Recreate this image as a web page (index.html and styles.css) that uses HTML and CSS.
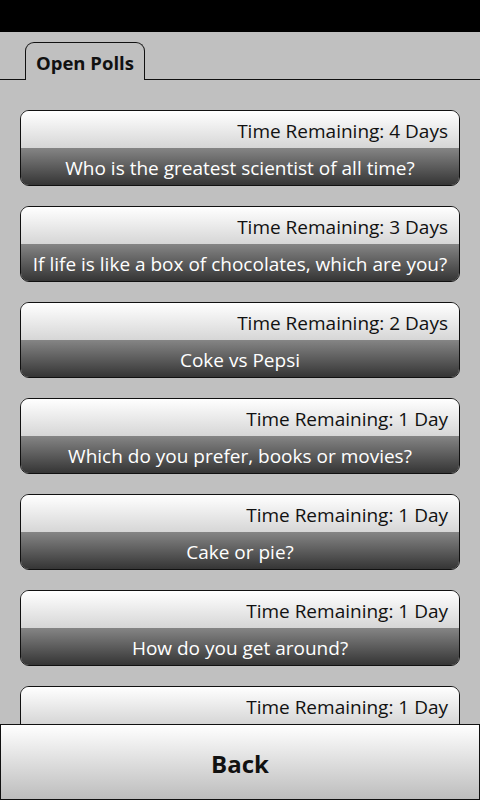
FILE: index.html
```html
<!DOCTYPE html>
<html lang="en">
<head>
    <meta charset="UTF-8">
    <meta name="viewport" content="width=device-width, initial-scale=1.0">
    <title>Open Polls</title>
    <link rel="stylesheet" href="styles.css">
</head>
<body>
    <div class="status-bar"></div>

    <div class="tabs">
        <div class="tab-line tab-line-left"></div>
        <div class="tab">Open Polls</div>
        <div class="tab-line"></div>
    </div>

    <div class="poll-list">
        <div class="poll">
            <div class="poll-time">Time Remaining: 4 Days</div>
            <div class="poll-question">Who is the greatest scientist of all time?</div>
        </div>
        <div class="poll">
            <div class="poll-time">Time Remaining: 3 Days</div>
            <div class="poll-question">If life is like a box of chocolates, which are you?</div>
        </div>
        <div class="poll">
            <div class="poll-time">Time Remaining: 2 Days</div>
            <div class="poll-question">Coke vs Pepsi</div>
        </div>
        <div class="poll">
            <div class="poll-time">Time Remaining: 1 Day</div>
            <div class="poll-question">Which do you prefer, books or movies?</div>
        </div>
        <div class="poll">
            <div class="poll-time">Time Remaining: 1 Day</div>
            <div class="poll-question">Cake or pie?</div>
        </div>
        <div class="poll">
            <div class="poll-time">Time Remaining: 1 Day</div>
            <div class="poll-question">How do you get around?</div>
        </div>
        <div class="poll">
            <div class="poll-time">Time Remaining: 1 Day</div>
            <div class="poll-question"></div>
        </div>
    </div>

    <button class="back-btn">Back</button>
</body>
</html>
```

FILE: styles.css
```css
body {
    margin: 0;
    height: 800px;
    display: flex;
    flex-direction: column;
    overflow: hidden;
    background-color: #c0c0c0;
    font-family: "Open Sans", "Noto Sans", sans-serif;
    color: #111;
}

.status-bar {
    height: 32px;
    background-color: #000;
    flex: none;
}

/* Tab header */
.tabs {
    display: flex;
    align-items: flex-end;
    padding-top: 10px;
    flex: none;
}

.tab-line {
    flex: 1;
    border-bottom: 1px solid #111;
}

.tab-line-left {
    flex: none;
    width: 25px;
}

.tab {
    padding: 7px 10px 4px 10px;
    border: 1px solid #111;
    border-bottom: none;
    border-radius: 9px 9px 0 0;
    font-size: 18.5px;
    font-weight: bold;
    line-height: 26px;
}

/* Poll cards */
.poll-list {
    flex: 1;
    overflow: hidden;
    padding: 30px 20px 0 20px;
    display: flex;
    flex-direction: column;
    gap: 20px;
}

.poll {
    flex: none;
    border: 1px solid #111;
    border-radius: 9px;
    overflow: hidden;
}

.poll-time,
.poll-question {
    box-sizing: border-box;
    height: 37px;
    padding-top: 4px;
    line-height: 33px;
    font-size: 19px;
}

.poll-time {
    text-align: right;
    padding-right: 11px;
    background: linear-gradient(#ffffff, #d6d6d6);
}

.poll-question {
    text-align: center;
    color: #fff;
    background: linear-gradient(#858585, #353535);
    white-space: nowrap;
}

.back-btn {
    flex: none;
    height: 76px;
    margin: 0;
    padding-top: 3px;
    border: 1px solid #111;
    background: linear-gradient(#ffffff, #bdbdbd);
    font-family: "Open Sans", "Noto Sans", sans-serif;
    font-size: 24px;
    font-weight: bold;
    color: #111;
    cursor: pointer;
}
```
